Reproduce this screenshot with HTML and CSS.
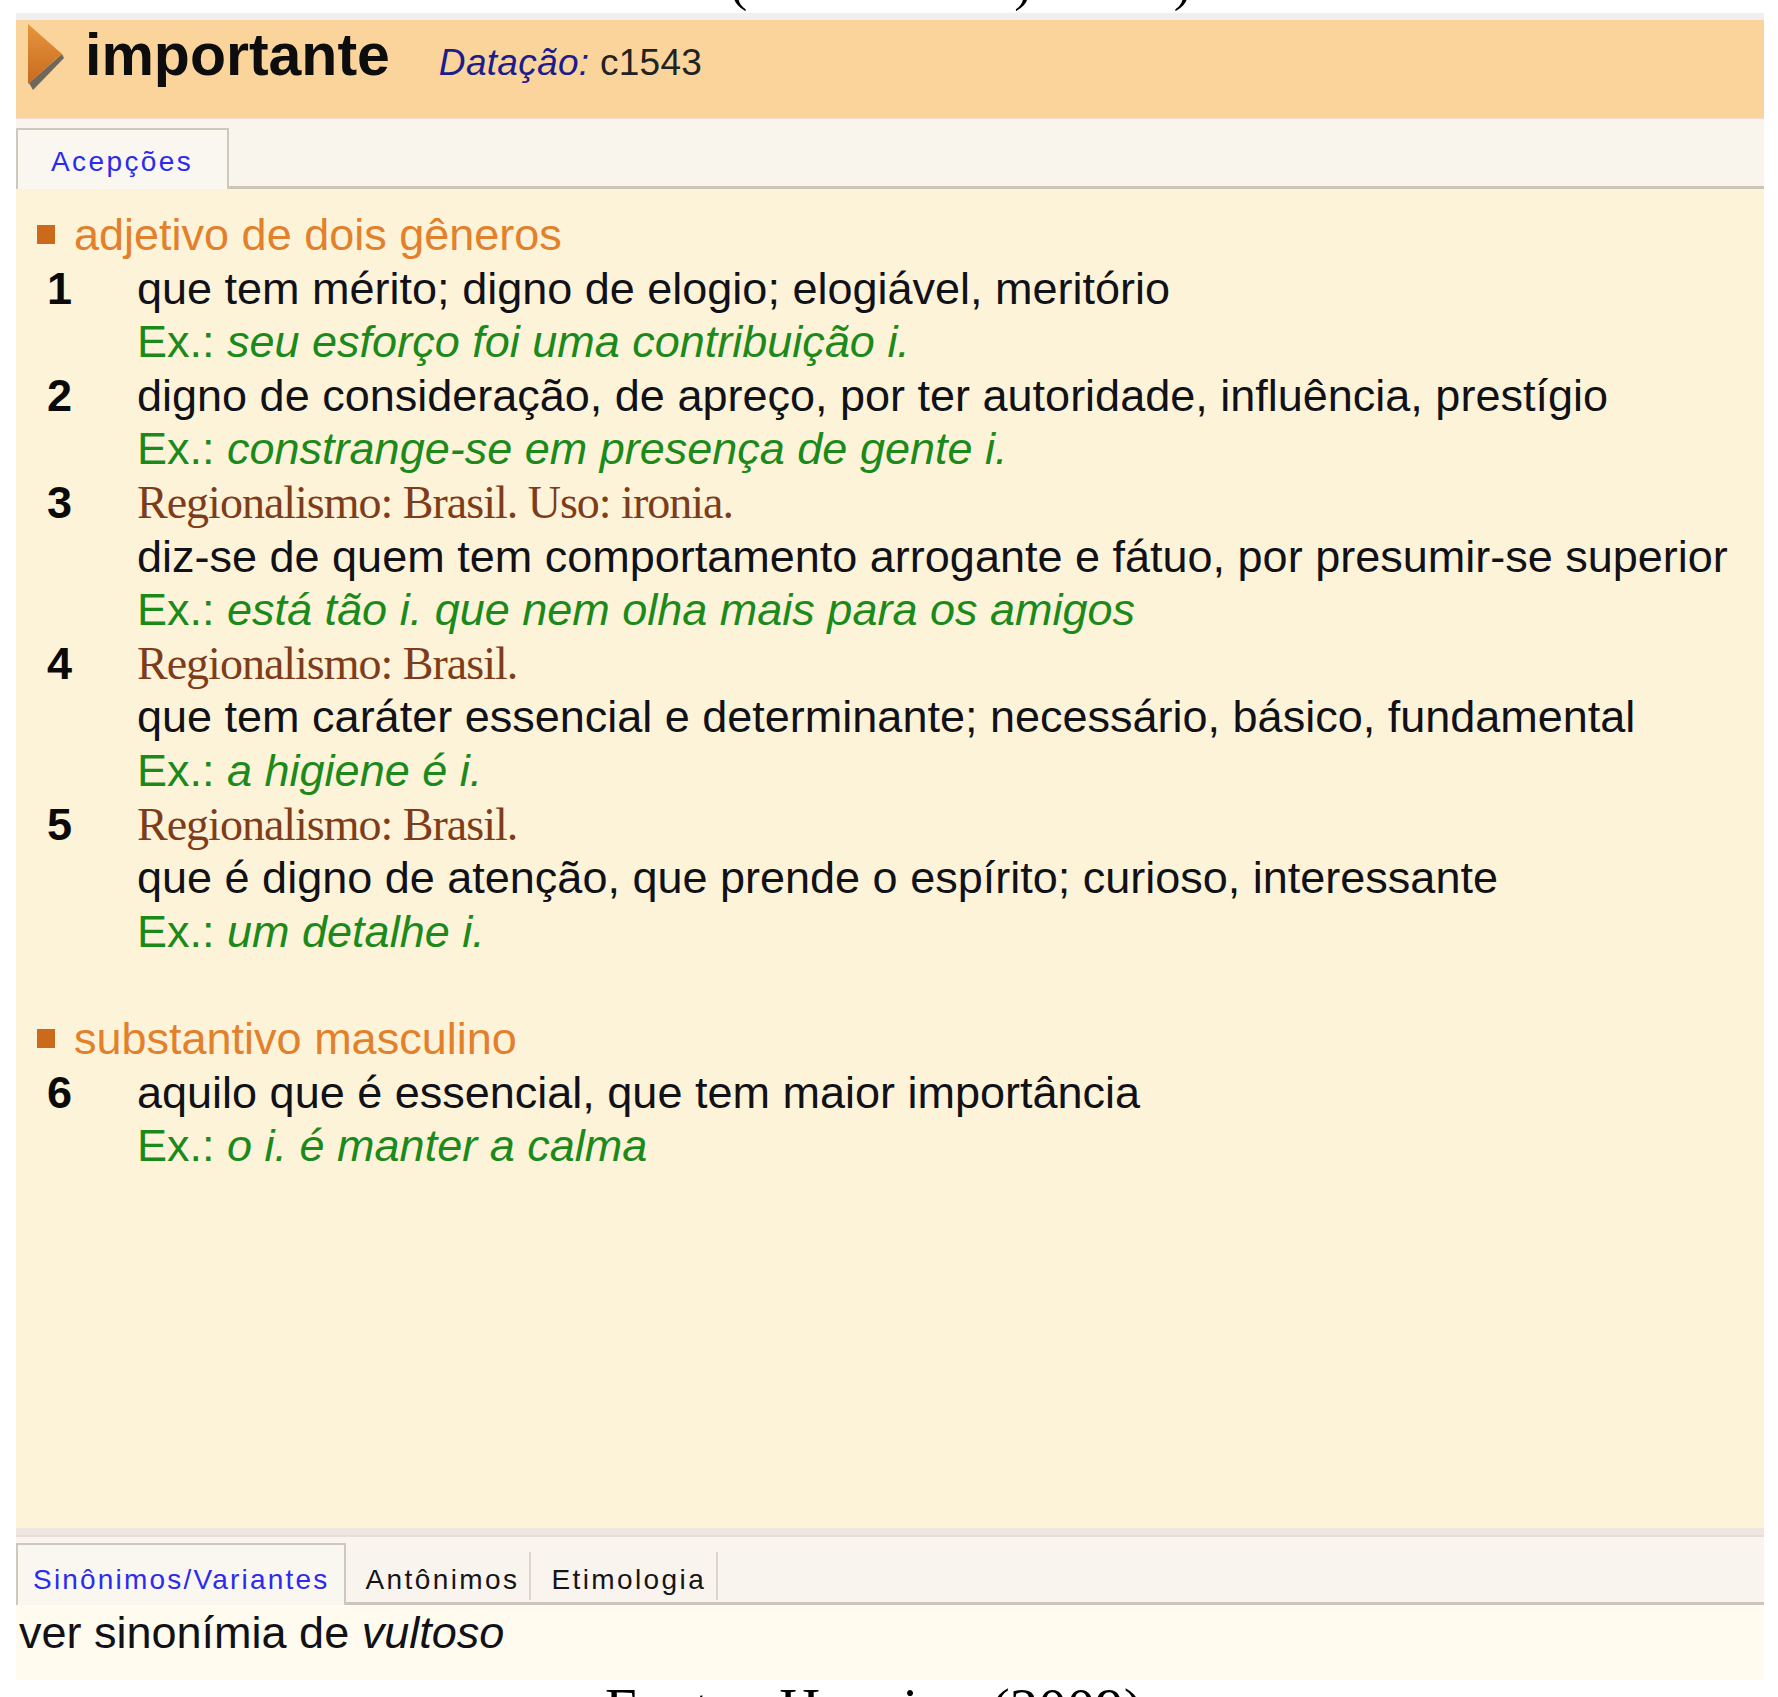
FILE: index.html
```html
<!DOCTYPE html>
<html lang="pt">
<head>
<meta charset="utf-8">
<title>importante</title>
<link rel="stylesheet" href="styles.css">
</head>
<body>
<div class="topfrag"><span class="f1">(</span><span class="f2">)</span><span class="f3">)</span></div>
<div class="panel">
  <div class="topstrip"></div>
  <header class="head">
    <svg class="arrow" width="42" height="68" viewBox="0 0 42 68">
      <defs>
        <linearGradient id="og" x1="0" y1="0" x2="0" y2="1">
          <stop offset="0" stop-color="#e6963e"/>
          <stop offset="1" stop-color="#c86a1e"/>
        </linearGradient>
      </defs>
      <polygon points="3,59 36,30 38,34 7,66" fill="#4b4b4b" opacity="0.8"/>
      <polygon points="2,0 36,30 2,60" fill="url(#og)"/>
    </svg>
    <div class="headtext">
      <span class="word">importante</span>
      <span class="date"><i>Datação:</i> c1543</span>
    </div>
  </header>
  <div class="tabbar">
    <div class="tab active">Acepções</div>
  </div>
  <div class="content">
    <div class="pos"><span class="sq"></span>adjetivo de dois gêneros</div>
    <div class="sense">
      <span class="num">1</span>
      <div class="body">
        <div class="def">que tem mérito; digno de elogio; elogiável, meritório</div>
        <div class="ex">Ex.: <i>seu esforço foi uma contribuição i.</i></div>
      </div>
    </div>
    <div class="sense">
      <span class="num">2</span>
      <div class="body">
        <div class="def">digno de consideração, de apreço, por ter autoridade, influência, prestígio</div>
        <div class="ex">Ex.: <i>constrange-se em presença de gente i.</i></div>
      </div>
    </div>
    <div class="sense">
      <span class="num">3</span>
      <div class="body">
        <div class="reg">Regionalismo: Brasil. Uso: ironia.</div>
        <div class="def">diz-se de quem tem comportamento arrogante e fátuo, por presumir-se superior</div>
        <div class="ex">Ex.: <i>está tão i. que nem olha mais para os amigos</i></div>
      </div>
    </div>
    <div class="sense">
      <span class="num">4</span>
      <div class="body">
        <div class="reg">Regionalismo: Brasil.</div>
        <div class="def">que tem caráter essencial e determinante; necessário, básico, fundamental</div>
        <div class="ex">Ex.: <i>a higiene é i.</i></div>
      </div>
    </div>
    <div class="sense">
      <span class="num">5</span>
      <div class="body">
        <div class="reg">Regionalismo: Brasil.</div>
        <div class="def">que é digno de atenção, que prende o espírito; curioso, interessante</div>
        <div class="ex">Ex.: <i>um detalhe i.</i></div>
      </div>
    </div>
    <div class="pos pos-gap"><span class="sq"></span>substantivo masculino</div>
    <div class="sense">
      <span class="num">6</span>
      <div class="body">
        <div class="def">aquilo que é essencial, que tem maior importância</div>
        <div class="ex">Ex.: <i>o i. é manter a calma</i></div>
      </div>
    </div>
  </div>
  <div class="bstrip"></div>
  <div class="tabbar2">
    <div class="btab active">Sinônimos/Variantes</div>
    <div class="btab">Antônimos</div>
    <div class="btab">Etimologia</div>
  </div>
  <div class="bcontent">ver sinonímia de <i>vultoso</i></div>
</div>
<div class="caption">Fonte: Houaiss (2009)</div>
</body>
</html>
```

FILE: styles.css
```css
html, body {
  margin: 0;
  padding: 0;
  background: #ffffff;
  overflow: hidden;
}

body {
  font-family: "Liberation Sans", Arial, sans-serif;
  color: #111118;
}

/* fragment of the line above the figure */
.topfrag {
  height: 13px;
  overflow: hidden;
  display: flex;
  font-family: "Liberation Serif", "Times New Roman", serif;
  font-size: 52px;
  line-height: 52px;
  color: #000;
}
.topfrag span {
  display: block;
  margin-top: -43px;
}
.topfrag .f1 { margin-left: 730px; }
.topfrag .f2 { margin-left: 267px; }
.topfrag .f3 { margin-left: 142px; }

.panel {
  margin-left: 16px;
  width: 1748px;
}

.topstrip {
  height: 7px;
  background: #efefef;
}

.head {
  height: 98px;
  background: #fad49b;
  display: flex;
  align-items: flex-start;
}

.arrow {
  display: block;
  margin-left: 10px;
  margin-top: 4px;
  flex: none;
}

.headtext {
  display: flex;
  align-items: baseline;
  margin-left: 17px;
  margin-top: 6px;
}

.word {
  font-size: 59px;
  line-height: 58px;
  font-weight: bold;
  color: #0d0d0d;
}

.date {
  margin-left: 49px;
  font-size: 37px;
  color: #222;
  letter-spacing: 0.3px;
}
.date i {
  color: #1c1c8c;
}

.tabbar {
  height: 67px;
  border-top: 1px solid #f3dccf;
  border-bottom: 3px solid #ccc5b8;
  background: #f9f4ec;
  display: flex;
  align-items: flex-end;
}

.tab {
  box-sizing: border-box;
  height: 61px;
  margin-bottom: -3px;
  padding: 12px 34px 0 33px;
  border: 2px solid #cfc8bd;
  border-bottom: none;
  background: #faf6f0;
  font-size: 28px;
  line-height: 40px;
  letter-spacing: 2.4px;
  color: #2b2bf0;
}

.content {
  box-sizing: border-box;
  height: 1339px;
  background: #fdf3d8;
  padding: 19px 0 0 21px;
  font-size: 45px;
  line-height: 53.6px;
}

.pos {
  display: flex;
  align-items: center;
  color: #e2802c;
}
.pos-gap {
  margin-top: 53.6px;
}
.sq {
  display: block;
  width: 18px;
  height: 19px;
  background: #cc6a1c;
  margin-right: 19px;
}

.sense {
  display: grid;
  grid-template-columns: 90px 1fr;
  margin-left: 10px;
}

.num {
  font-weight: bold;
  color: #0a0a0a;
}

.def {
  color: #111118;
  white-space: nowrap;
}

.reg {
  font-family: "Liberation Serif", "Times New Roman", serif;
  font-size: 46px;
  letter-spacing: -1px;
  color: #7e3c1a;
}

.ex {
  color: #1b8a1b;
  white-space: nowrap;
}

.bstrip {
  height: 7px;
  background: #efe7df;
  border-bottom: 2px solid #e7ded6;
}

.tabbar2 {
  height: 65px;
  border-bottom: 3px solid #ccc5bb;
  background: #f9f4ee;
  display: flex;
  align-items: flex-end;
}

.btab {
  box-sizing: border-box;
  height: 48px;
  margin-bottom: 2px;
  padding: 8px 10px 0 20px;
  border-right: 2px solid #dcd5cb;
  font-size: 28px;
  line-height: 40px;
  letter-spacing: 2.4px;
  color: #151515;
}

.btab.active {
  height: 62px;
  margin-bottom: -3px;
  padding: 15px 14px 0 15px;
  border: 2px solid #cfc8bd;
  border-bottom: none;
  background: #faf6f0;
  color: #2b2bf0;
  letter-spacing: 2.2px;
}

.bcontent {
  box-sizing: border-box;
  height: 75px;
  background: #fffbee;
  padding: 3px 0 0 3px;
  font-size: 45px;
  line-height: 50px;
  color: #111118;
}

.caption {
  padding-left: 605px;
  font-family: "Liberation Serif", "Times New Roman", serif;
  font-size: 57px;
  line-height: 57px;
  word-spacing: 14px;
  color: #000;
  white-space: nowrap;
}
```
